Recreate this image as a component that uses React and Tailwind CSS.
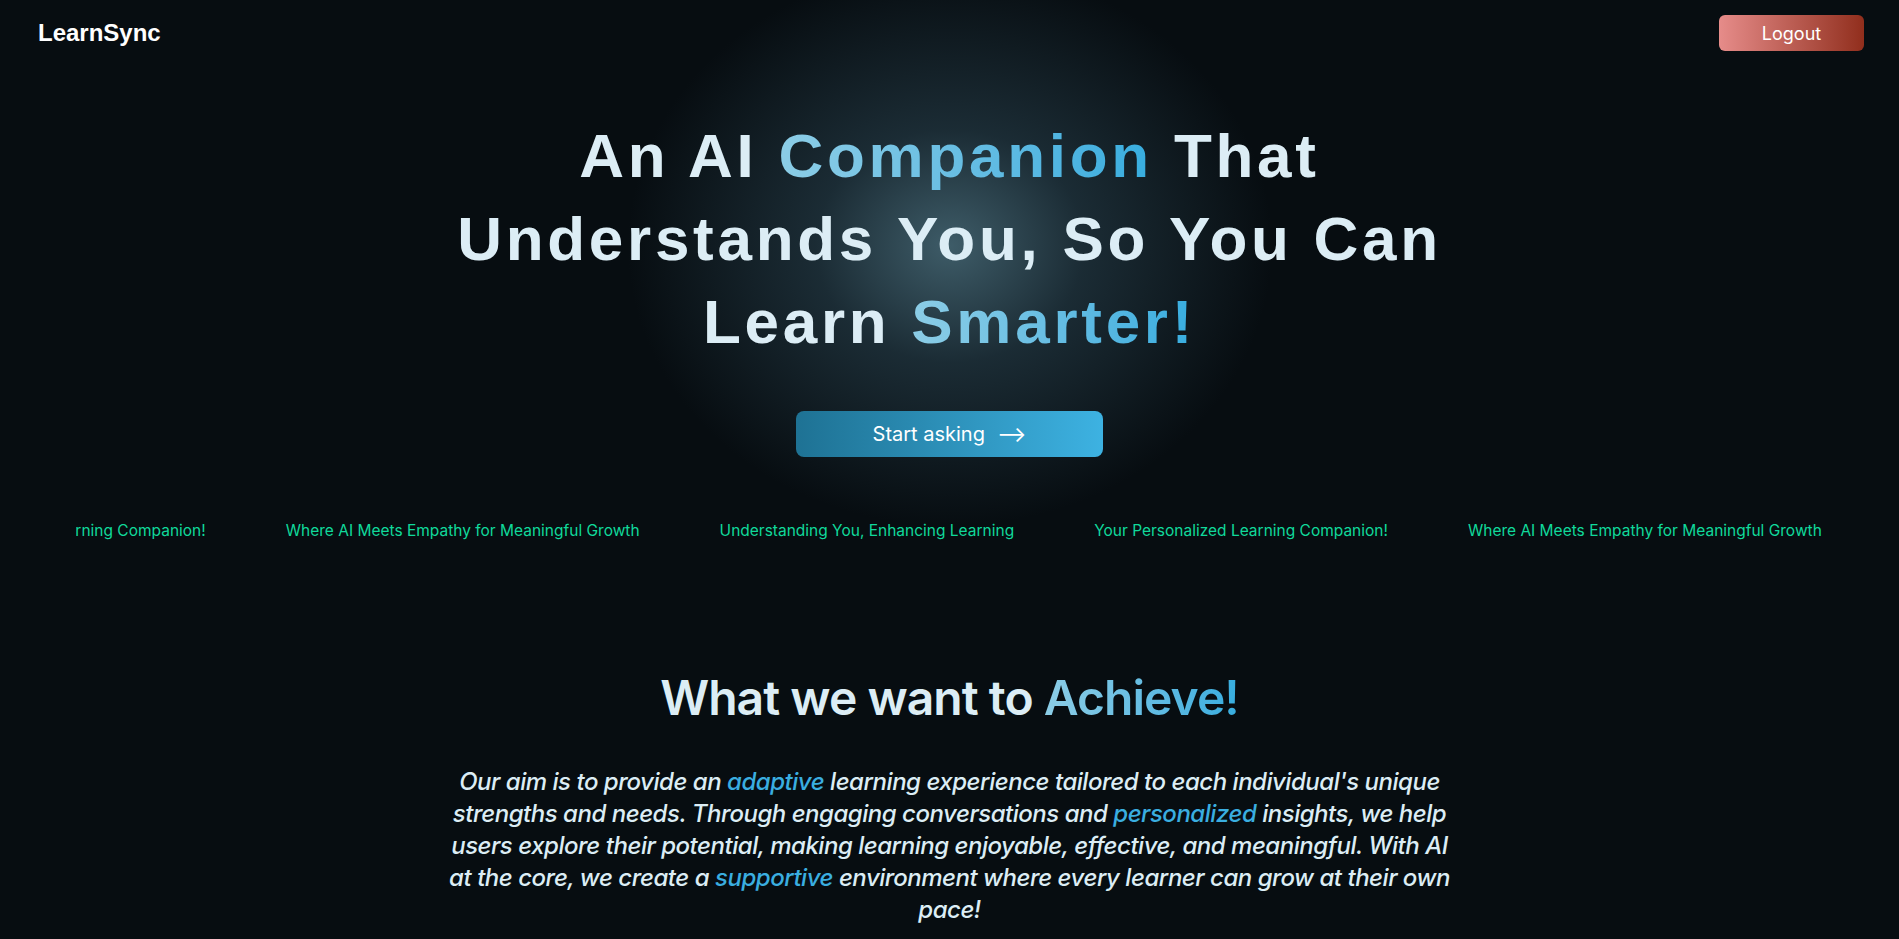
const phrases = [
  "Your Personalized Learning Companion!",
  "Where AI Meets Empathy for Meaningful Growth",
  "Understanding You, Enhancing Learning",
];

export default function App() {
  const strip = [...phrases, ...phrases];

  return (
    <div
      className="min-h-screen bg-[#070d11] text-[#dcedf5] overflow-hidden"
      style={{ fontFamily: "Inter, 'Noto Sans', sans-serif" }}
    >
      {/* Navbar */}
      <header className="flex items-center justify-between pl-[38px] pr-[35px] pt-[15px]">
        <div className="font-['Liberation_Sans',Arial,sans-serif] text-[24px] font-bold text-white">
          LearnSync
        </div>
        <button className="w-[145px] h-[36px] rounded-md bg-gradient-to-r from-[#e68c8a] to-[#912e1c] text-white text-[18px]">
          Logout
        </button>
      </header>

      {/* Hero */}
      <section className="relative flex flex-col items-center">
        <div className="absolute left-1/2 top-[-135px] w-[760px] h-[660px] -translate-x-1/2 bg-[radial-gradient(ellipse_at_center,rgba(62,92,104,1)_0%,rgba(40,64,76,0.6)_25%,rgba(7,13,17,0)_60%)] pointer-events-none" />
        <h1 className="relative mt-[63px] text-center font-['Liberation_Sans',Arial,sans-serif] font-bold text-[62px] leading-[83px] tracking-[0.06em]">
          <span className="block">
            An AI{" "}
            <span className="bg-gradient-to-r from-[#8ccde6] to-[#36addf] bg-clip-text text-transparent">
              Companion
            </span>{" "}
            That
          </span>
          <span className="block">Understands You, So You Can</span>
          <span className="block">
            Learn{" "}
            <span className="bg-gradient-to-r from-[#8ccde6] to-[#36addf] bg-clip-text text-transparent">
              Smarter!
            </span>
          </span>
        </h1>

        <button className="relative mt-[48px] w-[307px] h-[46px] rounded-lg bg-gradient-to-r from-[#1e7294] to-[#3db2e2] text-white text-[20px] flex items-center justify-center gap-3">
          Start asking
          <span className="text-[22px] leading-none">⟶</span>
        </button>
      </section>

      {/* Marquee */}
      <div className="mx-auto mt-[62px] w-[92%] overflow-hidden">
        <div className="flex whitespace-nowrap ml-[-204px]">
          {strip.map((p, i) => (
            <span key={i} className="px-10 text-[15.5px] text-[#10d99b]">
              {p}
            </span>
          ))}
        </div>
      </div>

      {/* Achieve */}
      <section className="mt-[132px] flex flex-col items-center">
        <h2 className="text-[48px] font-semibold leading-none tracking-[-0.02em]">
          What we want to{" "}
          <span className="bg-gradient-to-r from-[#8ccde6] to-[#36addf] bg-clip-text text-transparent">
            Achieve!
          </span>
        </h2>
        <p className="mt-[44px] max-w-[1060px] text-center text-[24px] leading-[32px] italic font-medium tracking-[-0.02em]">
          Our aim is to provide an <span className="text-[#3aaee0]">adaptive</span> learning
          experience tailored to each individual's unique
          <br />
          strengths and needs. Through engaging conversations and{" "}
          <span className="text-[#3aaee0]">personalized</span> insights, we help
          <br />
          users explore their potential, making learning enjoyable, effective, and meaningful. With AI
          <br />
          at the core, we create a <span className="text-[#3aaee0]">supportive</span> environment
          where every learner can grow at their own
          <br />
          pace!
        </p>
      </section>
    </div>
  );
}
